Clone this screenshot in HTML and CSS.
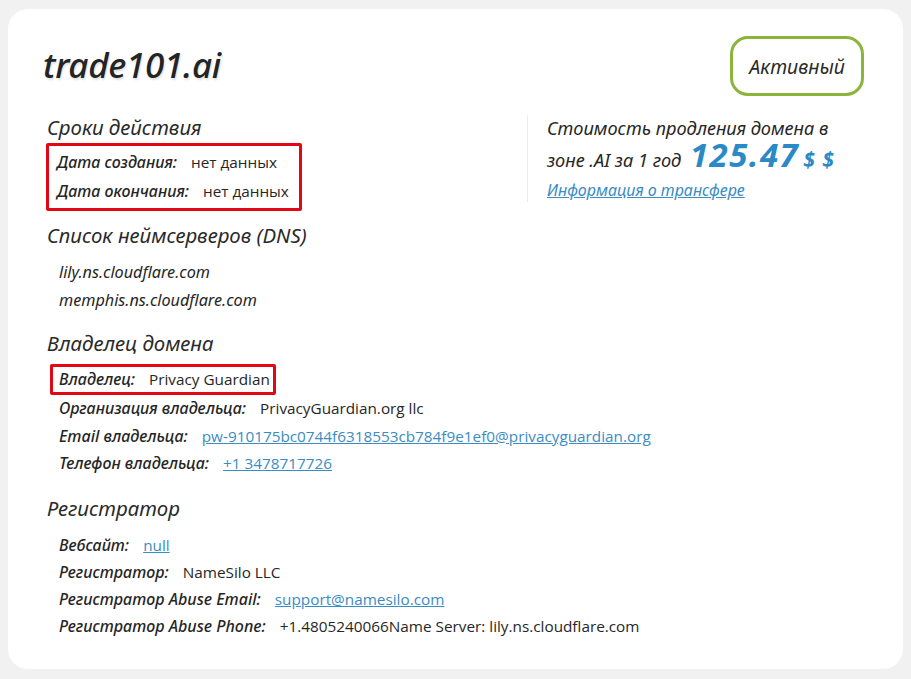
FILE: index.html
```html
<!DOCTYPE html>
<html lang="ru">
<head>
<meta charset="utf-8">
<title>trade101.ai</title>
<link rel="stylesheet" href="styles.css">
</head>
<body>
<div class="card">
  <div class="header">
    <h1 class="title">trade101.ai</h1>
    <div class="badge">Активный</div>
  </div>

  <div class="top">
    <div class="top-left">
      <h2 class="heading">Сроки действия</h2>
      <div class="mark mark-dates">
        <div class="row"><span class="label">Дата создания:</span><span class="value">нет данных</span></div>
        <div class="row"><span class="label">Дата окончания:</span><span class="value">нет данных</span></div>
      </div>
    </div>
    <div class="top-right">
      <div class="price-text">Стоимость продления домена в</div>
      <div class="price-text price-line">зоне .AI за 1 год <span class="price">125.47</span><span class="cur">$ $</span></div>
      <a class="transfer" href="#">Информация о трансфере</a>
    </div>
  </div>

  <h2 class="heading h-dns">Список неймсерверов (DNS)</h2>
  <div class="dns">
    <div class="dns-row">lily.ns.cloudflare.com</div>
    <div class="dns-row">memphis.ns.cloudflare.com</div>
  </div>

  <h2 class="heading h-owner">Владелец домена</h2>
  <div class="mark mark-owner">
    <div class="row"><span class="label">Владелец:</span><span class="value">Privacy Guardian</span></div>
  </div>
  <div class="rows">
    <div class="row"><span class="label">Организация владельца:</span><span class="value">PrivacyGuardian.org llc</span></div>
    <div class="row"><span class="label">Email владельца:</span><a class="value link" href="#">pw-910175bc0744f6318553cb784f9e1ef0@privacyguardian.org</a></div>
    <div class="row"><span class="label">Телефон владельца:</span><a class="value link" href="#">+1 3478717726</a></div>
  </div>

  <h2 class="heading h-reg">Регистратор</h2>
  <div class="rows rows-reg">
    <div class="row"><span class="label">Вебсайт:</span><a class="value link" href="#">null</a></div>
    <div class="row"><span class="label">Регистратор:</span><span class="value">NameSilo LLC</span></div>
    <div class="row"><span class="label">Регистратор Abuse Email:</span><a class="value link" href="#">support@namesilo.com</a></div>
    <div class="row"><span class="label">Регистратор Abuse Phone:</span><span class="value">+1.4805240066Name Server: lily.ns.cloudflare.com</span></div>
  </div>
</div>
</body>
</html>
```

FILE: styles.css
```css
* { box-sizing: border-box; }
html, body { margin: 0; padding: 0; }
body {
  background: #f1f1f1;
  padding: 9px 8px 10px 8px;
  font-family: "Noto Sans", "Open Sans", sans-serif;
  color: #262626;
}
.card {
  background: #fff;
  border-radius: 20px;
  height: 660px;
  padding: 27px 39px 0 39px;
}
.header {
  display: flex;
  justify-content: space-between;
  align-items: center;
  height: 60px;
}
.title {
  margin: -3px 0 0 -4px;
  font-family: "Noto Sans", sans-serif;
  font-style: italic;
  font-weight: 500;
  font-size: 35px;
  letter-spacing: -0.3px;
  color: #242424;
  text-shadow: 1px 2px 2px rgba(0,0,0,0.12);
}
.badge {
  width: 134px;
  height: 60px;
  border: 3px solid #8cb43a;
  border-radius: 18px;
  display: flex;
  align-items: center;
  justify-content: center;
  font-style: italic;
  font-size: 19.5px;
  color: #2a2a2a;
}
.heading {
  margin: 0;
  font-style: italic;
  font-weight: 400;
  font-size: 20.4px;
  line-height: 28px;
  color: #2a2a2a;
}
.top {
  display: flex;
  margin-top: 17px;
}
.top-left {
  width: 480px;
}
.top-right {
  margin-top: 2px;
  border-left: 1px solid #ececec;
  padding-left: 19px;
  height: 87px;
}
.price-text {
  font-style: italic;
  font-size: 18.2px;
  line-height: 26px;
  color: #262626;
}
.price-line {
  line-height: 28px;
}
.price {
  display: inline-block;
  line-height: 28px;
  font-weight: 700;
  font-size: 33px;
  letter-spacing: 1.5px;
  color: #2b8ac6;
  margin-left: 4px;
}
.cur {
  font-weight: 700;
  font-size: 21px;
  color: #2b8ac6;
  margin-left: 4px;
  letter-spacing: 1px;
}
.transfer {
  display: block;
  margin-top: 6px;
  font-style: italic;
  font-size: 16px;
  color: #3a8cc4;
  text-decoration: underline;
  line-height: 20px;
}
.mark {
  border: 3px solid #e30613;
  border-radius: 2px;
}
.mark-dates {
  display: inline-block;
  margin: 2px 0 0 -1px;
  padding: 2px 10px 2px 8px;
}
.mark-dates .row { line-height: 29px; }
.row {
  display: flex;
  align-items: baseline;
  white-space: nowrap;
  line-height: 27.5px;
}
.label {
  font-style: italic;
  font-weight: 500;
  font-size: 16px;
  color: #262626;
  margin-right: 14px;
}
.value {
  font-family: "Open Sans", sans-serif;
  font-size: 15.3px;
  color: #262626;
}
.link {
  color: #3a8cc4;
  text-decoration: underline;
}
.h-dns { margin-top: 10px; }
.dns { margin: 9px 0 0 12px; }
.dns-row {
  font-style: italic;
  font-size: 16.2px;
  line-height: 28px;
  color: #262626;
}
.h-owner { margin-top: 15px; }
.mark-owner {
  display: inline-block;
  margin: 7px 0 0 3px;
  padding: 0 3px 0 6px;
}
.mark-owner .row { line-height: 25px; }
.rows { margin-left: 12px; }
.h-reg { margin-top: 16px; }
.rows-reg { margin-top: 10px; }
.rows-reg .row { line-height: 27.3px; }
```
